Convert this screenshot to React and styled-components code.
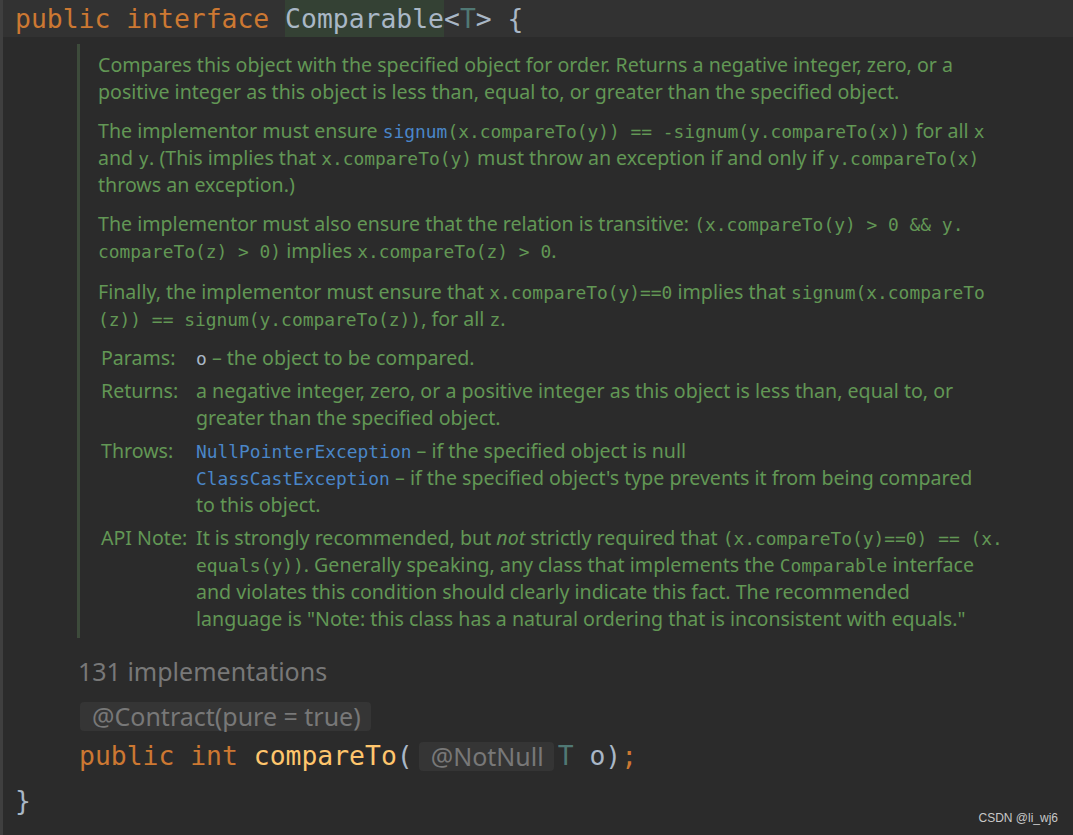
import React from "react";
import styled, { createGlobalStyle } from "styled-components";

const Global = createGlobalStyle`
  html, body { margin: 0; padding: 0; background: #2b2b2b; }
  body { width: 1073px; height: 835px; overflow: hidden; }
  #root { height: 835px; }
`;

const MONO = `"DejaVu Sans Mono", "Liberation Mono", monospace`;
const SANS = `"Noto Sans", "Open Sans", sans-serif`;

const Editor = styled.div`
  position: relative;
  height: 835px;
  background: #2b2b2b;
  border-left: 3px solid #3f3f3f;
  box-sizing: border-box;
  display: flex;
  flex-direction: column;
`;

const CodeLine = styled.div`
  font-family: ${MONO};
  font-size: 26.4px;
  height: ${(p) => p.$h || 37}px;
  line-height: ${(p) => p.$h || 37}px;
  padding-left: ${(p) => p.$indent || 12}px;
  margin-top: ${(p) => p.$mt || 0}px;
  background: ${(p) => (p.$current ? "#323232" : "transparent")};
  color: #a9b7c6;
  white-space: pre;
  display: flex;
  align-items: center;
`;

const Kw = styled.span`color: #cc7832;`;
const Cls = styled.span`
  color: #a9b7c6;
  background: ${(p) => (p.$hl ? "#344134" : "transparent")};
  align-self: stretch;
  display: inline-flex;
  align-items: center;
`;
const TypeParam = styled.span`color: #507874;`;
const Method = styled.span`color: #ffc66d;`;
const Plain = styled.span`color: #a9b7c6;`;

const Inlay = styled.span`
  font-family: ${SANS};
  font-size: 25px;
  color: #787878;
  background: #353535;
  border-radius: 4px;
  padding: 0 10px 0 12px;
  height: 29px;
  line-height: 29px;
  display: inline-block;
  margin: ${(p) => p.$margin || "0"};
`;

const DocBlock = styled.div`
  margin: 7px 0 0 74px;
  border-left: 3px solid #3d4b3b;
  padding: 7px 0 6px 18px;
  width: 960px;
  font-family: ${SANS};
  font-size: 19.6px;
  color: #629755;
  display: flex;
  flex-direction: column;
`;

const Para = styled.div`
  margin-top: ${(p) => p.$gap || 0}px;
`;

const Line = styled.div`
  height: 27px;
  line-height: 27px;
  white-space: pre;
`;

const M = styled.span`
  font-family: ${MONO};
  font-size: 17.9px;
  color: ${(p) => p.$c || "#629755"};
`;

const Link = styled.span`
  font-family: ${MONO};
  font-size: 17.9px;
  color: #4a86c8;
`;

const Tags = styled.div`
  margin-top: 12px;
  display: grid;
  grid-template-columns: 98px 1fr;
  row-gap: 6px;
`;

const Label = styled.div`
  padding-left: 3px;
  line-height: 27px;
`;

const Value = styled.div``;

const Implementations = styled.div`
  font-family: ${SANS};
  font-size: 25px;
  color: #787878;
  height: 30px;
  line-height: 30px;
  padding-left: 75px;
  margin-top: 18px;
`;

const InlayRow = styled.div`
  margin-top: 15px;
  padding-left: 77px;
  height: 30px;
  display: flex;
  align-items: center;
`;

const Watermark = styled.div`
  position: absolute;
  right: 15px;
  bottom: 10px;
  font-family: "Liberation Sans", Arial, sans-serif;
  font-size: 12px;
  color: #c8c8c8;
`;

export default function App() {
  return (
    <>
      <Global />
      <Editor>
        <CodeLine $current>
          <Kw>public interface </Kw>
          <Cls $hl>Comparable</Cls>
          <Plain>&lt;</Plain>
          <TypeParam>T</TypeParam>
          <Plain>&gt; {"{"}</Plain>
        </CodeLine>

        <DocBlock>
          <Para>
            <Line>Compares this object with the specified object for order. Returns a negative integer, zero, or a</Line>
            <Line>positive integer as this object is less than, equal to, or greater than the specified object.</Line>
          </Para>
          <Para $gap={12}>
            <Line>
              The implementor must ensure <Link>signum</Link>
              <M>(x.compareTo(y)) == -signum(y.compareTo(x))</M> for all <M>x</M>
            </Line>
            <Line>
              and <M>y</M>. (This implies that <M>x.compareTo(y)</M> must throw an exception if and only if <M>y.compareTo(x)</M>
            </Line>
            <Line>throws an exception.)</Line>
          </Para>
          <Para $gap={12}>
            <Line>
              The implementor must also ensure that the relation is transitive: <M>(x.compareTo(y) &gt; 0 &amp;&amp; y.</M>
            </Line>
            <Line>
              <M>compareTo(z) &gt; 0)</M> implies <M>x.compareTo(z) &gt; 0</M>.
            </Line>
          </Para>
          <Para $gap={14}>
            <Line>
              Finally, the implementor must ensure that <M>x.compareTo(y)==0</M> implies that <M>signum(x.compareTo</M>
            </Line>
            <Line>
              <M>(z)) == signum(y.compareTo(z))</M>, for all <M>z</M>.
            </Line>
          </Para>
          <Tags>
            <Label>Params:</Label>
            <Value>
              <Line>
                <M $c="#a9b7c6">o</M> – the object to be compared.
              </Line>
            </Value>
            <Label>Returns:</Label>
            <Value>
              <Line>a negative integer, zero, or a positive integer as this object is less than, equal to, or</Line>
              <Line>greater than the specified object.</Line>
            </Value>
            <Label>Throws:</Label>
            <Value>
              <Line>
                <Link>NullPointerException</Link> – if the specified object is null
              </Line>
              <Line>
                <Link>ClassCastException</Link> – if the specified object's type prevents it from being compared
              </Line>
              <Line>to this object.</Line>
            </Value>
            <Label>API Note:</Label>
            <Value>
              <Line>
                It is strongly recommended, but <i>not</i> strictly required that <M>(x.compareTo(y)==0) == (x.</M>
              </Line>
              <Line>
                <M>equals(y))</M>. Generally speaking, any class that implements the <M>Comparable</M> interface
              </Line>
              <Line>and violates this condition should clearly indicate this fact. The recommended</Line>
              <Line>language is "Note: this class has a natural ordering that is inconsistent with equals."</Line>
            </Value>
          </Tags>
        </DocBlock>

        <Implementations>131 implementations</Implementations>

        <InlayRow>
          <Inlay>@Contract(pure = true)</Inlay>
        </InlayRow>

        <CodeLine $indent={76} $h={44} $mt={3}>
          <Kw>public int </Kw>
          <Method>compareTo</Method>
          <Plain>(</Plain>
          <Inlay $margin="0 4px 0 6px">@NotNull</Inlay>
          <TypeParam>T </TypeParam>
          <Plain>o)</Plain>
          <Kw>;</Kw>
        </CodeLine>

        <CodeLine $h={46}>
          <Plain>{"}"}</Plain>
        </CodeLine>

        <Watermark>CSDN @li_wj6</Watermark>
      </Editor>
    </>
  );
}
